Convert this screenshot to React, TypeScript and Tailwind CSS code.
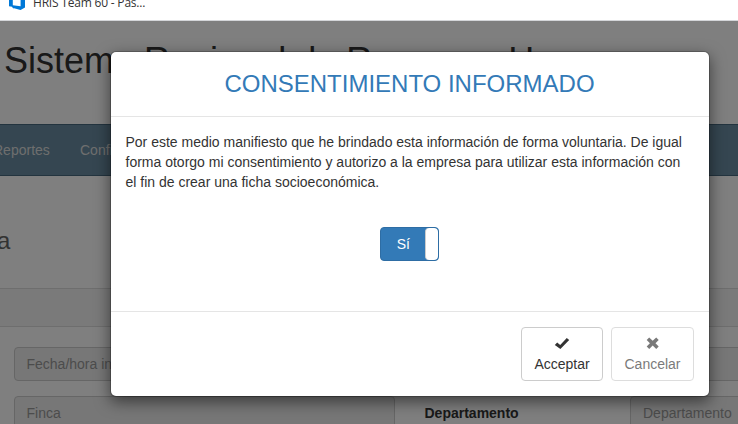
import type { ReactNode } from "react";

function Tab() {
  return (
    <div className="flex h-[21px] items-start border-b border-[#d4d6d9] bg-white pl-[9px]">
      <svg className="h-[11px] w-[16px] shrink-0" viewBox="0 0 16 11">
        <path fill="#0078d7" d="M0 0H3.8V5.2L11.6 6.2V0H16V7.6L11.6 9.9L4.2 8L4.8 9.6L3 6.8L0 6.2Z" />
      </svg>
      <span className="-mt-[5px] ml-[8px] font-['Open_Sans',sans-serif] text-[12px] leading-[16px] tracking-[-0.2px] whitespace-nowrap text-[#333]">
        HRIS Team 60 - Pas...
      </span>
    </div>
  );
}

function Field({ children, className }: { children: ReactNode; className: string }) {
  return (
    <div className={`h-[34px] shrink-0 rounded border border-[#ccc] bg-[#eee] px-[11.5px] py-[6px] text-[14px] leading-5 whitespace-nowrap text-[#999] ${className}`}>
      {children}
    </div>
  );
}

function Page() {
  return (
    <div className="flex h-[403px] flex-col overflow-hidden bg-white text-[#333]">
      <h1 className="h-[103px] shrink-0 pt-[20px] pl-[4px] text-[36px] leading-[40px] whitespace-nowrap">
        Sistema Regional de Recursos Humanos
      </h1>
      <nav className="flex h-[52px] shrink-0 items-center gap-[30px] border-y border-[#46687e] bg-[#6a8da3] text-[14px] text-[#ddd]">
        <span className="-ml-[7px] w-[57px]">Reportes</span>
        <span>Configuración</span>
      </nav>
      <div className="h-[112px] shrink-0 pt-[52px] text-[24px] leading-[26px] text-[#666]">
        <span className="-ml-[3px]">a</span>
      </div>
      <div className="h-[39px] shrink-0 border-y border-[#ddd] bg-[#f5f5f5]" />
      <div className="flex shrink-0 pt-[20px] pl-[14px]">
        <Field className="w-[381px]">Fecha/hora ingreso</Field>
        <Field className="ml-[235px] w-[381px]">{""}</Field>
      </div>
      <div className="flex shrink-0 pt-[15px] pl-[14px]">
        <Field className="w-[381px]">Finca</Field>
        <b className="w-[235px] shrink-0 pt-[7px] pl-[29.5px] text-[14px] leading-5">Departamento</b>
        <Field className="w-[381px] indent-[0.5px]">Departamento</Field>
      </div>
    </div>
  );
}

function DialogButton({ label, icon, className }: { label: string; icon: ReactNode; className: string }) {
  return (
    <button className={`flex h-[54px] flex-col items-center rounded border border-[#ccc] bg-white pt-[6px] text-[14px] leading-5 text-[#333] ${className}`}>
      <span className="flex h-5 items-center">{icon}</span>
      <span>{label}</span>
    </button>
  );
}

function Modal() {
  return (
    <section className="absolute top-[51px] left-[110px] flex h-[346px] w-[600px] flex-col rounded-[6px] border border-black/20 bg-white bg-clip-padding shadow-[0_5px_15px_rgba(0,0,0,0.5)]">
      <h3 className="h-[65px] shrink-0 border-b border-[#e5e5e5] pt-[19px] pr-[1px] text-center text-[24px] leading-[26px] text-[#337ab7]">
        CONSENTIMIENTO INFORMADO
      </h3>
      <div className="flex h-[194px] shrink-0 flex-col items-center pt-[15px] pr-[16px] pl-[14.5px]">
        <p className="w-full text-[14px] leading-5 text-[#333]">
          Por este medio manifiesto que he brindado esta información de forma voluntaria. De igual
          forma otorgo mi consentimiento y autorizo a la empresa para utilizar esta información con
          el fin de crear una ficha socioeconómica.
        </p>
        <div className="mt-[35px] flex h-[34px] w-[59px] overflow-hidden rounded border border-[#2e6da4] bg-[#337ab7]">
          <span className="w-[44px] pt-[6px] pl-[1px] text-center text-[14px] leading-5 text-white">Sí</span>
          <span className="h-full w-[13px] rounded-[4px] border-l border-[#ccc] bg-white" />
        </div>
      </div>
      <footer className="flex flex-1 justify-end gap-[8px] border-t border-[#e5e5e5] pt-[15px] pr-[15px]">
        <DialogButton
          label="Acceptar"
          className="w-[82px]"
          icon={
            <svg width="16" height="14" viewBox="0 0 16 14" fill="#333">
              <path d="M0.8 8L3.2 5.4L6.2 7.9L12.8 0.9L15.2 3L6.4 12Z" />
            </svg>
          }
        />
        <DialogButton
          label="Cancelar"
          className="w-[83px] opacity-65"
          icon={
            <svg width="14" height="14" viewBox="0 0 14 14" fill="#333">
              <path d="M3.2 0.4L6.7 3.8L10.2 0.4L12.7 2.9L9.5 6.2L12.7 9.5L10.2 12L6.7 8.6L3.2 12L0.7 9.5L3.9 6.2L0.7 2.9Z" />
            </svg>
          }
        />
      </footer>
    </section>
  );
}

export default function App() {
  return (
    <main className="relative h-[424px] w-[738px] overflow-hidden bg-white font-['Liberation_Sans',Arial,sans-serif]">
      <Tab />
      <Page />
      <div className="absolute inset-x-0 top-[21px] bottom-0 bg-black/50" />
      <Modal />
    </main>
  );
}
